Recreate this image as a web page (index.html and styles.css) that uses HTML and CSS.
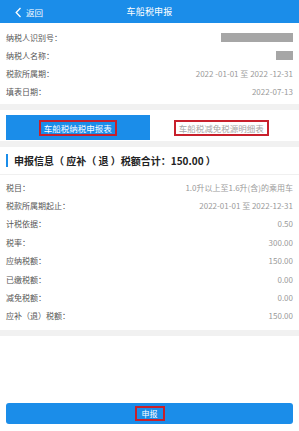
FILE: index.html
```html
<!DOCTYPE html>
<html lang="zh-CN">
<head>
  <meta charset="UTF-8" />
  <meta name="viewport" content="width=device-width, initial-scale=1.0"/>
  <title>车船税申报</title>
  <link rel="stylesheet" href="styles.css">
</head>
<body>
  <!-- Top bar -->
  <header class="top-bar">
    <a href="#" class="back-link">
      <svg class="back-icon" width="7" height="11" viewBox="0 0 7 11">
        <polyline points="5.5,1 1.2,5.5 5.5,10" fill="none" stroke="#fff" stroke-width="1.3"/>
      </svg>
      <span>返回</span>
    </a>
    <h1 class="page-title">车船税申报</h1>
    <span></span>
  </header>

  <!-- Taxpayer info -->
  <section class="info-block">
    <div class="row">
      <span class="label">纳税人识别号：</span>
      <span class="masked masked-long"></span>
    </div>
    <div class="row">
      <span class="label">纳税人名称：</span>
      <span class="masked masked-short"></span>
    </div>
    <div class="row">
      <span class="label">税款所属期：</span>
      <span class="value">2022 -01-01 至 2022 -12-31</span>
    </div>
    <div class="row">
      <span class="label">填表日期：</span>
      <span class="value">2022-07-13</span>
    </div>
  </section>

  <!-- Tabs -->
  <section class="tab-block">
    <div class="tab active"><span class="tab-text">车船税纳税申报表</span></div>
    <div class="tab"><span class="tab-text">车船税减免税源明细表</span></div>
  </section>

  <!-- Declaration detail -->
  <section class="detail-block">
    <h2 class="section-title">申报信息（ 应补（ 退 ）税额合计：150.00 ）</h2>
    <div class="detail-rows">
      <div class="row detail-row">
        <span class="label">税目：</span>
        <span class="value">1.0升以上至1.6升(含)的乘用车</span>
      </div>
      <div class="row detail-row">
        <span class="label">税款所属期起止：</span>
        <span class="value">2022-01-01 至 2022-12-31</span>
      </div>
      <div class="row detail-row">
        <span class="label">计税依据：</span>
        <span class="value">0.50</span>
      </div>
      <div class="row detail-row">
        <span class="label">税率：</span>
        <span class="value">300.00</span>
      </div>
      <div class="row detail-row">
        <span class="label">应纳税额：</span>
        <span class="value">150.00</span>
      </div>
      <div class="row detail-row">
        <span class="label">已缴税额：</span>
        <span class="value">0.00</span>
      </div>
      <div class="row detail-row">
        <span class="label">减免税额：</span>
        <span class="value">0.00</span>
      </div>
      <div class="row detail-row">
        <span class="label">应补（退）税额：</span>
        <span class="value">150.00</span>
      </div>
    </div>
  </section>

  <div class="spacer"></div>

  <footer class="footer">
    <button type="button" class="submit-btn"><span class="submit-text">申报</span></button>
  </footer>
</body>
</html>
```

FILE: styles.css
```css
:root {
  --blue: #1b8de9;
  --gray-gap: #f1f1f1;
  --label: #555;
  --value: #9a9a9a;
  --red: #c8202c;
}

html, body {
  margin: 0;
  padding: 0;
  height: 100%;
}

body {
  display: flex;
  flex-direction: column;
  min-height: 100vh;
  background: #fff;
  font-family: "Noto Sans CJK SC", "Noto Sans", sans-serif;
  font-size: 8px;
  color: var(--label);
}

/* top bar */
.top-bar {
  height: 23px;
  background: var(--blue);
  display: grid;
  grid-template-columns: 1fr auto 1fr;
  align-items: center;
  padding: 0 15px;
  color: #fff;
}

.back-link {
  display: flex;
  align-items: center;
  gap: 4px;
  color: #fff;
  text-decoration: none;
  font-size: 8.5px;
}

.back-icon {
  display: block;
  margin-top: 1px;
}

.page-title {
  margin: 0;
  font-size: 9px;
  font-weight: normal;
  letter-spacing: 0.2px;
}

/* rows */
.row {
  display: flex;
  justify-content: space-between;
  align-items: center;
  height: 18px;
}

.label {
  color: var(--label);
}

.value {
  color: var(--value);
}

.info-block {
  padding: 5px 6px 4px;
  border-bottom: 6px solid var(--gray-gap);
}

.masked {
  display: block;
  height: 9px;
  background: #a6a6a6;
}

.masked-long {
  width: 72px;
}

.masked-short {
  width: 17px;
}

/* tabs */
.tab-block {
  display: flex;
  padding: 5px 6px 1px;
  border-bottom: 6px solid var(--gray-gap);
}

.tab {
  flex: 1;
  height: 25px;
  display: flex;
  justify-content: center;
  align-items: center;
  color: #a5a5a5;
}

.tab.active {
  background: var(--blue);
  color: #fff;
}

.tab-text {
  border: 2px solid var(--red);
  padding: 0 3px;
  height: 12px;
  line-height: 12px;
  font-size: 8.5px;
}

/* detail */
.detail-block {
  border-bottom: 6px solid var(--gray-gap);
}

.section-title {
  margin: 0;
  height: 27px;
  display: flex;
  align-items: center;
  gap: 6px;
  padding: 0 6px;
  font-size: 10px;
  font-weight: bold;
  color: #222;
  white-space: pre;
  border-bottom: 1px solid #f0f0f0;
}

.section-title::before {
  content: "";
  width: 2px;
  height: 13px;
  background: var(--blue);
}

.detail-rows {
  padding: 3px 6px 5px;
}

.detail-row {
  height: 18.4px;
}

.spacer {
  flex: 1;
}

/* footer */
.footer {
  padding: 0 6px 7px;
}

.submit-btn {
  display: flex;
  justify-content: center;
  align-items: center;
  width: 100%;
  height: 21px;
  border: none;
  border-radius: 3px;
  background: var(--blue);
  color: #fff;
  font-family: inherit;
  font-size: 8px;
  padding: 0;
}

.submit-text {
  border: 2px solid var(--red);
  padding: 0 5px;
  height: 11px;
  line-height: 11px;
}
```
